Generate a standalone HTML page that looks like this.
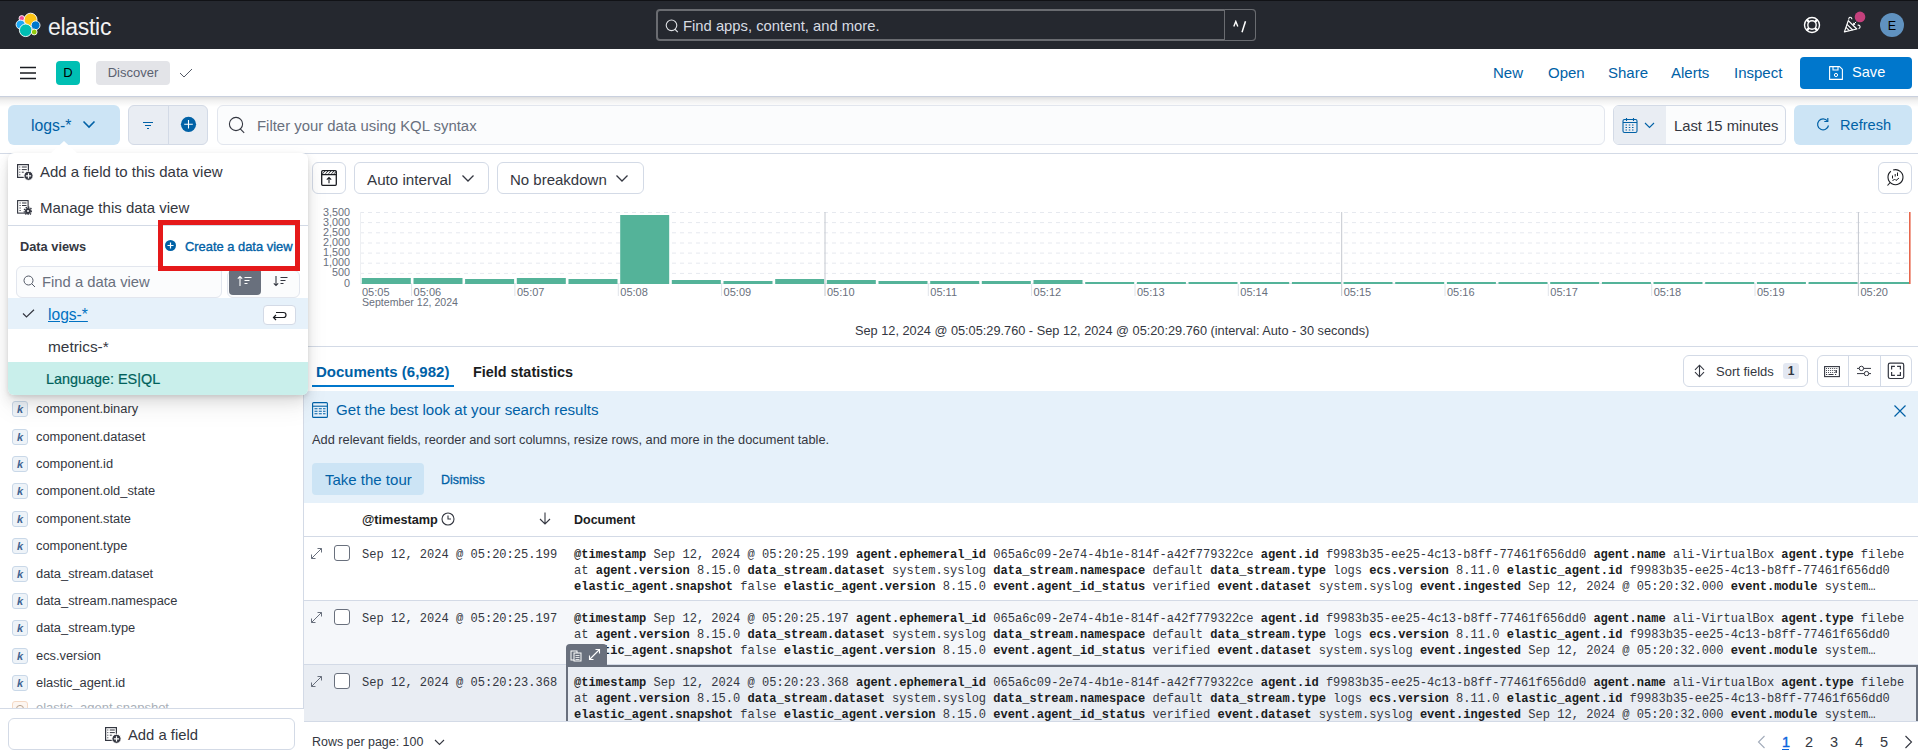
<!DOCTYPE html>
<html><head><meta charset="utf-8">
<style>
*{box-sizing:border-box;margin:0;padding:0}
html,body{width:1918px;height:750px;overflow:hidden;background:#fff;font-family:"Liberation Sans",sans-serif;color:#343741}
.a{position:absolute}
.mono{font-family:"Liberation Mono",monospace}
svg{display:block}
</style></head><body>

<!-- top dark header -->
<div class="a" style="left:0;top:0;width:1918px;height:49px;background:#25282f"></div>
<svg class="a" style="left:15px;top:12px" width="26" height="26" viewBox="0 0 26 26">
  <circle cx="6.8" cy="6.4" r="2.8" fill="#f04e98" stroke="#fff" stroke-width="0.9"/>
  <circle cx="15.6" cy="7.6" r="6.4" fill="#fec514" stroke="#fff" stroke-width="0.9"/>
  <circle cx="5.6" cy="12.6" r="4.5" fill="#1ba9f5" stroke="#fff" stroke-width="0.9"/>
  <circle cx="20.6" cy="13.3" r="4.4" fill="#0077cc" stroke="#fff" stroke-width="0.9"/>
  <circle cx="10.7" cy="18.3" r="6.3" fill="#00bfb3" stroke="#fff" stroke-width="0.9"/>
  <circle cx="19.2" cy="20" r="2.9" fill="#93c90e" stroke="#fff" stroke-width="0.9"/>
</svg>
<div class="a" style="left:48px;top:14px;font-size:23px;color:#f2f2f2;letter-spacing:-0.3px">elastic</div>

<!-- global search -->
<div class="a" style="left:0;top:0;width:1918px;height:1px;background:#111216"></div>
<div class="a" style="left:656px;top:9px;width:600px;height:32px;border:2px solid #6a6c71;border-radius:4px;background:#25282f"></div>
<div class="a" style="left:1224px;top:9px;width:32px;height:32px;border:1px solid #6a6c71;border-radius:0 4px 4px 0;background:#25282f"></div>
<svg class="a" style="left:665px;top:19px" width="15" height="15" viewBox="0 0 15 15"><circle cx="6.5" cy="6.3" r="5.3" fill="none" stroke="#e0e2e6" stroke-width="1.1"/><path d="M9.7 10 L12.8 13.2" stroke="#e0e2e6" stroke-width="1.1"/></svg>
<div class="a" style="left:683px;top:18px;font-size:14.8px;color:#d8dce3">Find apps, content, and more.</div>
<svg class="a" style="left:1232px;top:20px" width="16" height="14" viewBox="0 0 16 14"><path d="M1.8 6.5 L3.8 1.5 L5.8 6.5" fill="none" stroke="#fff" stroke-width="1.4"/><path d="M13.5 1.3 L10 12.2" stroke="#fff" stroke-width="1.5"/></svg>

<!-- header right icons -->
<svg class="a" style="left:1802px;top:15px" width="20" height="20" viewBox="0 0 20 20"><circle cx="10" cy="10" r="7.5" fill="none" stroke="#fff" stroke-width="1.4"/><circle cx="10" cy="10" r="4.2" fill="none" stroke="#fff" stroke-width="1.4"/><path d="M4.7 4.7 L7 7 M15.3 4.7 L13 7 M4.7 15.3 L7 13 M15.3 15.3 L13 13" stroke="#fff" stroke-width="2.4"/></svg>
<svg class="a" style="left:1843px;top:10px" width="24" height="24" viewBox="0 0 24 24"><path d="M1.4 21.9 L5.3 10.6 L13.8 19 Z" fill="none" stroke="#fff" stroke-width="1.2" stroke-linejoin="round"/><path d="M4 14.3 L9.7 20 M3 17.4 L6.4 20.7" stroke="#fff" stroke-width="1.1"/><path d="M5.8 9.6 C 5.3 6.8, 8.6 6.2, 8.9 9.2" fill="none" stroke="#fff" stroke-width="1.1"/><path d="M10.5 14.5 L13.2 11.8 M10.5 14.5 l0.2 -1.7 M10.5 14.5 l1.7 -0.2" stroke="#fff" stroke-width="1"/><path d="M14.6 15.2 C 17.4 14.6, 18 18, 15.6 18.8" fill="none" stroke="#fff" stroke-width="1.1"/><circle cx="17" cy="6.9" r="5.3" fill="#c4407c"/></svg>
<div class="a" style="left:1880px;top:13px;width:24px;height:24px;border-radius:50%;background:#6092c0"></div><div class="a" style="left:1880px;top:14px;width:24px;font-size:12.5px;text-align:center;line-height:24px;color:#000">E</div>

<!-- second bar -->
<div class="a" style="left:0;top:49px;width:1918px;height:48px;background:#fff;border-bottom:1px solid #c9d0de"></div>
<svg class="a" style="left:20px;top:66px" width="16" height="14" viewBox="0 0 16 14"><path d="M0 1.5 H16 M0 7 H16 M0 12.5 H16" stroke="#1a1c21" stroke-width="1.4"/></svg>
<div class="a" style="left:56px;top:61px;width:24px;height:24px;border-radius:4px;background:#00bfb3;color:#000;font-size:13px;text-align:center;line-height:24px">D</div>
<div class="a" style="left:96px;top:61px;width:74px;height:24px;border-radius:4px;background:#e3e4e8;color:#5a6170;font-size:13px;text-align:center;line-height:24px">Discover</div>
<svg class="a" style="left:179px;top:68px" width="14" height="11" viewBox="0 0 14 11"><path d="M1 5 L5 9 L13 1" fill="none" stroke="#535966" stroke-width="1"/></svg>

<div class="a" style="left:1493px;top:64px;font-size:15px;color:#0061a6">New</div>
<div class="a" style="left:1548px;top:64px;font-size:15px;color:#0061a6">Open</div>
<div class="a" style="left:1608px;top:64px;font-size:15px;color:#0061a6">Share</div>
<div class="a" style="left:1671px;top:64px;font-size:15px;color:#0061a6">Alerts</div>
<div class="a" style="left:1734px;top:64px;font-size:15px;color:#0061a6">Inspect</div>
<div class="a" style="left:1800px;top:57px;width:112px;height:32px;border-radius:4px;background:#0077cc"></div>
<svg class="a" style="left:1828px;top:65px" width="16" height="16" viewBox="0 0 16 16"><path d="M1.6 1.6 H11.6 L14.4 4.4 V14.4 H1.6 Z" fill="none" stroke="#fff" stroke-width="1.1" stroke-linejoin="round"/><path d="M5 1.6 V5 H10 V1.6" fill="none" stroke="#fff" stroke-width="1.1"/><circle cx="8" cy="10" r="1.6" fill="none" stroke="#fff" stroke-width="1"/></svg>
<div class="a" style="left:1852px;top:64px;font-size:14.6px;color:#fff">Save</div>

<!-- toolbar -->
<div class="a" style="left:0;top:97px;width:1918px;height:57px;background:#fff;border-bottom:1px solid #d3dae6"></div>
<div class="a" style="left:0;top:97px;width:1918px;height:10px;background:linear-gradient(rgba(0,0,0,.13),rgba(0,0,0,.05) 40%,rgba(0,0,0,0))"></div>
<div class="a" style="left:8px;top:105px;width:112px;height:40px;border-radius:6px;background:#cce4f5"></div>
<div class="a" style="left:31px;top:117px;font-size:15.8px;color:#0061a6">logs-*</div>
<svg class="a" style="left:82px;top:120px" width="14" height="9" viewBox="0 0 14 9"><path d="M1.5 1.5 L7 7 L12.5 1.5" fill="none" stroke="#0061a6" stroke-width="1.6"/></svg>
<div class="a" style="left:128px;top:105px;width:80px;height:40px;border-radius:6px;background:#e9edf3;border:1px solid #d3dae6"></div>
<div class="a" style="left:168px;top:106px;width:1px;height:38px;background:#d3dae6"></div>
<svg class="a" style="left:143px;top:121px" width="10" height="9" viewBox="0 0 10 9"><path d="M0 1.5 H10 M2 4.5 H8 M4 7.5 H6" stroke="#0061a6" stroke-width="1.1"/></svg>
<svg class="a" style="left:180px;top:116px" width="17" height="17" viewBox="0 0 17 17"><circle cx="8.5" cy="8.3" r="7.6" fill="#0061a6"/><path d="M8.5 4 V12.6 M4.2 8.3 H12.8" stroke="#fff" stroke-width="1.1"/></svg>
<div class="a" style="left:217px;top:105px;width:1388px;height:40px;border-radius:6px;background:#fbfcfd;border:1px solid #e2e6ee"></div>
<svg class="a" style="left:228px;top:116px" width="18" height="18" viewBox="0 0 18 18"><circle cx="8" cy="8" r="6.6" fill="none" stroke="#343741" stroke-width="1.1"/><path d="M12 12.6 L16.2 16.8" stroke="#343741" stroke-width="1.1"/></svg>
<div class="a" style="left:257px;top:118px;font-size:14.9px;color:#69707d">Filter your data using KQL syntax</div>
<div class="a" style="left:1613px;top:105px;width:173px;height:40px;border-radius:6px;background:#fbfcfd;border:1px solid #d3dae6"></div>
<div class="a" style="left:1614px;top:106px;width:52px;height:38px;border-radius:5px 0 0 5px;background:#e9edf3"></div>
<svg class="a" style="left:1622px;top:117px" width="16" height="17" viewBox="0 0 16 17"><rect x="1" y="2.5" width="14" height="13" rx="1.5" fill="none" stroke="#0061a6" stroke-width="1.1"/><path d="M1 5.5 H15 M4.5 1 V4 M11.5 1 V4" stroke="#0061a6" stroke-width="1.1"/><path d="M3.5 8 h1.5 M6.8 8 h1.5 M10 8 h1.5 M3.5 10.5 h1.5 M6.8 10.5 h1.5 M10 10.5 h1.5 M3.5 13 h1.5 M6.8 13 h1.5 M10 13 h1.5" stroke="#0061a6" stroke-width="1.2"/></svg>
<svg class="a" style="left:1644px;top:122px" width="11" height="7" viewBox="0 0 11 7"><path d="M1 1 L5.5 5.5 L10 1" fill="none" stroke="#0061a6" stroke-width="1.1"/></svg>
<div class="a" style="left:1674px;top:118px;font-size:14.8px;color:#343741">Last 15 minutes</div>
<div class="a" style="left:1794px;top:105px;width:118px;height:40px;border-radius:6px;background:#cce4f5"></div>
<svg class="a" style="left:1816px;top:117px" width="14" height="15" viewBox="0 0 14 15"><path d="M11.5 4 A5.5 5.5 0 1 0 12.5 8.5" fill="none" stroke="#0061a6" stroke-width="1.2"/><path d="M11.8 1 V4.5 H8.3" fill="none" stroke="#0061a6" stroke-width="1.2"/></svg>
<div class="a" style="left:1840px;top:117px;font-size:14.6px;color:#0061a6">Refresh</div>

<!-- main chart -->
<div class="a" style="left:312px;top:162px;width:34px;height:32px;border:1px solid #d3dae6;border-radius:6px;background:#fff"></div>
<svg class="a" style="left:321px;top:170px" width="16" height="16" viewBox="0 0 16 16"><rect x="0.7" y="0.7" width="14.6" height="14.6" rx="1" fill="none" stroke="#1a1c21" stroke-width="1.3"/><path d="M0.7 4.6 H15.3" stroke="#1a1c21" stroke-width="1.3"/><path d="M1.5 3.8 L4 1 M4.5 3.8 L7 1 M7.5 3.8 L10 1 M10.5 3.8 L13 1 M13 3.8 L15.3 1.3" stroke="#1a1c21" stroke-width=".9"/><path d="M8 13.2 V7.5 M5.8 9.7 L8 7.5 L10.2 9.7" fill="none" stroke="#1a1c21" stroke-width="1.1"/></svg>
<div class="a" style="left:354px;top:162px;width:135px;height:32px;border:1px solid #d3dae6;border-radius:6px;background:#fff"></div>
<div class="a" style="left:367px;top:171px;font-size:15.2px;color:#343741">Auto interval</div>
<svg class="a" style="left:461px;top:174px" width="14" height="9" viewBox="0 0 14 9"><path d="M1.5 1.5 L7 7 L12.5 1.5" fill="none" stroke="#343741" stroke-width="1.3"/></svg>
<div class="a" style="left:497px;top:162px;width:147px;height:32px;border:1px solid #d3dae6;border-radius:6px;background:#fff"></div>
<div class="a" style="left:510px;top:171px;font-size:15px;color:#343741">No breakdown</div>
<svg class="a" style="left:615px;top:174px" width="14" height="9" viewBox="0 0 14 9"><path d="M1.5 1.5 L7 7 L12.5 1.5" fill="none" stroke="#343741" stroke-width="1.3"/></svg>
<div class="a" style="left:1878px;top:162px;width:34px;height:32px;border:1px solid #d3dae6;border-radius:6px;background:#fff"></div>
<svg class="a" style="left:1885px;top:167px" width="20" height="20" viewBox="0 0 20 20"><path d="M8.18 3.07 A7.5 7.5 0 1 1 5.88 4.29" fill="none" stroke="#1a1c21" stroke-width="1.1"/><path d="M5.20 15.50 L2.5 18.5" stroke="#1a1c21" stroke-width="1.1"/><path d="M7.5 8.5 V11.5 M10.2 7 V9.5 M12.5 5.5 V9" stroke="#1a1c21" stroke-width="1"/><path d="M7.5 14 L9.5 12 L11 13.5 L14 11" fill="none" stroke="#1a1c21" stroke-width="1"/></svg>
<svg class="a" style="left:305px;top:200px" width="1613" height="115" viewBox="0 0 1613 115" font-family="Liberation Sans" font-size="11" fill="#69707d">
<path d="M55 12.5 H1604" stroke="#e6e9ef" stroke-width="1" stroke-dasharray="4 4"/><path d="M55 22.6 H1604" stroke="#e6e9ef" stroke-width="1" stroke-dasharray="4 4"/><path d="M55 32.8 H1604" stroke="#e6e9ef" stroke-width="1" stroke-dasharray="4 4"/><path d="M55 43.0 H1604" stroke="#e6e9ef" stroke-width="1" stroke-dasharray="4 4"/><path d="M55 53.1 H1604" stroke="#e6e9ef" stroke-width="1" stroke-dasharray="4 4"/><path d="M55 63.2 H1604" stroke="#e6e9ef" stroke-width="1" stroke-dasharray="4 4"/><path d="M55 73.4 H1604" stroke="#e6e9ef" stroke-width="1" stroke-dasharray="4 4"/><path d="M55 83.5 H1604" stroke="#e6e9ef" stroke-width="1" stroke-dasharray="4 4"/>
<path d="M55.5 12 V84" stroke="#eef0f3" stroke-width="1"/>
<rect x="56.8" y="78" width="49" height="6" fill="#54b399"/><rect x="108.5" y="78" width="49" height="6" fill="#54b399"/><rect x="160.1" y="79" width="49" height="5" fill="#54b399"/><rect x="211.8" y="78" width="49" height="6" fill="#54b399"/><rect x="263.5" y="79" width="49" height="5" fill="#54b399"/><rect x="315.2" y="15" width="49" height="69" fill="#54b399"/><rect x="366.8" y="80" width="49" height="4" fill="#54b399"/><rect x="418.5" y="81" width="49" height="3" fill="#54b399"/><rect x="470.2" y="79" width="49" height="5" fill="#54b399"/><rect x="521.8" y="80" width="49" height="4" fill="#54b399"/><rect x="573.5" y="81" width="49" height="3" fill="#54b399"/><rect x="625.2" y="81" width="49" height="3" fill="#54b399"/><rect x="676.8" y="81" width="49" height="3" fill="#54b399"/><rect x="728.5" y="80" width="49" height="4" fill="#54b399"/><rect x="780.2" y="82" width="49" height="2" fill="#54b399"/><rect x="831.9" y="82" width="49" height="2" fill="#54b399"/><rect x="883.5" y="82" width="49" height="2" fill="#54b399"/><rect x="935.2" y="82" width="49" height="2" fill="#54b399"/><rect x="986.9" y="82" width="49" height="2" fill="#54b399"/><rect x="1038.5" y="82" width="49" height="2" fill="#54b399"/><rect x="1090.2" y="82" width="49" height="2" fill="#54b399"/><rect x="1141.9" y="82" width="49" height="2" fill="#54b399"/><rect x="1193.5" y="82" width="49" height="2" fill="#54b399"/><rect x="1245.2" y="82" width="49" height="2" fill="#54b399"/><rect x="1296.9" y="82" width="49" height="2" fill="#54b399"/><rect x="1348.5" y="82" width="49" height="2" fill="#54b399"/><rect x="1400.2" y="82" width="49" height="2" fill="#54b399"/><rect x="1451.9" y="82" width="49" height="2" fill="#54b399"/><rect x="1503.6" y="82" width="49" height="2" fill="#54b399"/><rect x="1555.2" y="82" width="49" height="2" fill="#54b399"/>
<path d="M106.6 84 V96" stroke="#e0e4ea" stroke-width="1"/><path d="M209.9 84 V96" stroke="#e0e4ea" stroke-width="1"/><path d="M313.3 84 V96" stroke="#e0e4ea" stroke-width="1"/><path d="M416.6 84 V96" stroke="#e0e4ea" stroke-width="1"/><path d="M520.0 12 V96" stroke="#c4c8cf" stroke-width="1"/><path d="M623.3 84 V96" stroke="#e0e4ea" stroke-width="1"/><path d="M726.6 84 V96" stroke="#e0e4ea" stroke-width="1"/><path d="M830.0 84 V96" stroke="#e0e4ea" stroke-width="1"/><path d="M933.3 84 V96" stroke="#e0e4ea" stroke-width="1"/><path d="M1036.7 12 V96" stroke="#c4c8cf" stroke-width="1"/><path d="M1140.0 84 V96" stroke="#e0e4ea" stroke-width="1"/><path d="M1243.3 84 V96" stroke="#e0e4ea" stroke-width="1"/><path d="M1346.7 84 V96" stroke="#e0e4ea" stroke-width="1"/><path d="M1450.0 84 V96" stroke="#e0e4ea" stroke-width="1"/><path d="M1553.4 12 V96" stroke="#c4c8cf" stroke-width="1"/>
<path d="M1604.8 12 V84" stroke="#e7664c" stroke-width="1.6"/>
<g text-anchor="end" font-size="10.8"><text x="45" y="16">3,500</text><text x="45" y="26">3,000</text><text x="45" y="36">2,500</text><text x="45" y="46">2,000</text><text x="45" y="56">1,500</text><text x="45" y="66">1,000</text><text x="45" y="76">500</text><text x="45" y="87">0</text></g>
<text x="57" y="96">05:05</text><text x="57" y="106" font-size="10.6">September 12, 2024</text><text x="108.6" y="96">05:06</text><text x="211.9" y="96">05:07</text><text x="315.3" y="96">05:08</text><text x="418.6" y="96">05:09</text><text x="522.0" y="96">05:10</text><text x="625.3" y="96">05:11</text><text x="728.6" y="96">05:12</text><text x="832.0" y="96">05:13</text><text x="935.3" y="96">05:14</text><text x="1038.7" y="96">05:15</text><text x="1142.0" y="96">05:16</text><text x="1245.3" y="96">05:17</text><text x="1348.7" y="96">05:18</text><text x="1452.0" y="96">05:19</text><text x="1555.4" y="96">05:20</text>
</svg>
<div class="a" style="left:855px;top:323px;font-size:12.75px;color:#343741">Sep 12, 2024 @ 05:05:29.760 - Sep 12, 2024 @ 05:20:29.760 (interval: Auto - 30 seconds)</div>
<div class="a" style="left:305px;top:346px;width:1613px;height:1px;background:#d3dae6"></div>
<!-- tabs -->
<style>
.doc{font-size:12.05px;line-height:16px;color:#343741;white-space:pre}
.doc b{color:#1a1c21}
</style>
<div class="a" style="left:316px;top:363px;font-size:15px;font-weight:bold;color:#0061a6">Documents (6,982)</div>
<div class="a" style="left:312px;top:385px;width:142px;height:2px;background:#0077cc"></div>
<div class="a" style="left:473px;top:364px;font-size:14.4px;font-weight:bold;color:#1a1c21">Field statistics</div>
<div class="a" style="left:1683px;top:355px;width:125px;height:32px;border:1px solid #d3dae6;border-radius:6px;background:#fff"></div>
<svg class="a" style="left:1693px;top:363px" width="13" height="16" viewBox="0 0 13 16"><path d="M6.5 2.2 V13.8 M2 6.8 L6.5 2.2 L11 6.8 M2 9.2 L6.5 13.8 L11 9.2" fill="none" stroke="#343741" stroke-width="1.1"/></svg>
<div class="a" style="left:1716px;top:364px;font-size:13px;color:#343741">Sort fields</div>
<div class="a" style="left:1783px;top:363px;width:16px;height:16px;border-radius:3px;background:#e3e8f2;font-size:12px;font-weight:bold;text-align:center;line-height:16px;color:#343741">1</div>
<div class="a" style="left:1817px;top:355px;width:95px;height:32px;border:1px solid #d3dae6;border-radius:6px;background:#fff"></div>
<div class="a" style="left:1848px;top:356px;width:1px;height:31px;background:#d3dae6"></div>
<div class="a" style="left:1880px;top:356px;width:1px;height:31px;background:#d3dae6"></div>
<svg class="a" style="left:1823px;top:365px" width="18" height="13" viewBox="0 0 18 13"><rect x="1.6" y="1.6" width="14.8" height="10" fill="none" stroke="#343741" stroke-width="1.1"/><path d="M2.60 2.5h0.9 M4.65 2.5h0.9 M6.70 2.5h0.9 M8.75 2.5h0.9 M10.80 2.5h0.9 M12.85 2.5h0.9 M2.60 4.5h0.9 M2.60 6.5h0.9 M4.65 4.5h0.9 M4.65 6.5h0.9 M6.70 4.5h0.9 M6.70 6.5h0.9 M8.75 4.5h0.9 M8.75 6.5h0.9 M10.80 4.5h0.9 M10.80 6.5h0.9" transform="translate(0.5 1)" stroke="#343741" stroke-width="1"/><path d="M13.2 5 V8" stroke="#343741" stroke-width="1.4" transform="translate(0 0)"/><path d="M3 9.5 h1.2 M5.5 9.5 h5 M12 9.5 h1.2" stroke="#343741" stroke-width="1"/></svg>
<svg class="a" style="left:1856px;top:364px" width="16" height="12" viewBox="0 0 16 12"><path d="M1 4.4h14 M1 9.6h14" stroke="#343741" stroke-width="1"/><circle cx="5.4" cy="4.4" r="2.2" fill="#fff" stroke="#343741" stroke-width="1"/><circle cx="10.5" cy="9.6" r="2.2" fill="#fff" stroke="#343741" stroke-width="1"/></svg>
<svg class="a" style="left:1887px;top:362px" width="18" height="18" viewBox="0 0 18 18"><rect x="1.3" y="1.1" width="15.4" height="15.4" rx="1.8" fill="none" stroke="#343741" stroke-width="1.2"/><path d="M4.6 7.6 V4.3 H7.9 M10.1 4.3 H13.4 V7.6 M13.4 10 V13.3 H10.1 M7.9 13.3 H4.6 V10" fill="none" stroke="#343741" stroke-width="1.2"/></svg>
<!-- callout -->
<div class="a" style="left:304px;top:391px;width:1614px;height:112px;background:#e6f1fa"></div>
<svg class="a" style="left:312px;top:402px" width="16" height="16" viewBox="0 0 16 16"><rect x="0.6" y="0.6" width="14.8" height="14.8" rx="1" fill="none" stroke="#0061a6" stroke-width="1.1"/><path d="M0.6 4.2 H15.4" stroke="#0061a6" stroke-width="1.1"/><path d="M2.5 6.8h3 M6.8 6.8h3 M11 6.8h2.5 M2.5 9.3h3 M6.8 9.3h3 M11 9.3h2.5 M2.5 11.8h3 M6.8 11.8h3 M11 11.8h2.5" stroke="#0061a6" stroke-width="1.1"/></svg>
<div class="a" style="left:336px;top:401px;font-size:15.1px;color:#0061a6">Get the best look at your search results</div>
<div class="a" style="left:312px;top:432px;font-size:12.8px;color:#343741">Add relevant fields, reorder and sort columns, resize rows, and more in the document table.</div>
<svg class="a" style="left:1893px;top:404px" width="14" height="14" viewBox="0 0 14 14"><path d="M1.5 1.5 L12.5 12.5 M12.5 1.5 L1.5 12.5" stroke="#0061a6" stroke-width="1.2"/></svg>
<div class="a" style="left:312px;top:463px;width:112px;height:32px;border-radius:4px;background:#cce4f5"></div>
<div class="a" style="left:325px;top:471px;font-size:15px;color:#0061a6">Take the tour</div>
<div class="a" style="left:441px;top:473px;font-size:12.5px;color:#0061a6;-webkit-text-stroke:0.3px #0061a6">Dismiss</div>
<!-- table -->
<div class="a" style="left:304px;top:503px;width:1614px;height:34px;background:#fff;border-bottom:1px solid #d3dae6"></div>
<div class="a" style="left:362px;top:513px;font-size:12.7px;font-weight:bold;color:#1a1c21">@timestamp</div>
<svg class="a" style="left:441px;top:512px" width="14" height="14" viewBox="0 0 14 14"><circle cx="7" cy="7" r="6" fill="none" stroke="#343741" stroke-width="1.1"/><path d="M7 3.5 V7 H10" fill="none" stroke="#343741" stroke-width="1.1"/></svg>
<svg class="a" style="left:539px;top:512px" width="12" height="13" viewBox="0 0 12 13"><path d="M6 0.5 V12 M1 7 L6 12 L11 7" fill="none" stroke="#343741" stroke-width="1.1"/></svg>
<div class="a" style="left:574px;top:513px;font-size:12.5px;font-weight:bold;color:#1a1c21">Document</div>
<div class="a" style="left:304px;top:537px;width:1614px;height:64px;background:#fff"></div>
<svg class="a" style="left:310px;top:547px" width="13" height="13" viewBox="0 0 13 13"><path d="M1.5 11.5 L11.5 1.5 M1.5 7.5 V11.5 H5.5 M7.5 1.5 H11.5 V5.5" fill="none" stroke="#69707d" stroke-width="1"/></svg>
<div class="a" style="left:334px;top:545px;width:16px;height:16px;border:1px solid #69707d;border-radius:3px;background:#fff"></div>
<div class="a mono doc" style="left:362px;top:547px">Sep 12, 2024 @ 05:20:25.199</div>
<div class="a mono doc" style="left:574px;top:547px"><b>@timestamp</b> Sep 12, 2024 @ 05:20:25.199 <b>agent.ephemeral_id</b> 065a6c09-2e74-4b1e-814f-a42f779322ce <b>agent.id</b> f9983b35-ee25-4c13-b8ff-77461f656dd0 <b>agent.name</b> ali-VirtualBox <b>agent.type</b> filebe<br>at <b>agent.version</b> 8.15.0 <b>data_stream.dataset</b> system.syslog <b>data_stream.namespace</b> default <b>data_stream.type</b> logs <b>ecs.version</b> 8.11.0 <b>elastic_agent.id</b> f9983b35-ee25-4c13-b8ff-77461f656dd0<br><b>elastic_agent.snapshot</b> false <b>elastic_agent.version</b> 8.15.0 <b>event.agent_id_status</b> verified <b>event.dataset</b> system.syslog <b>event.ingested</b> Sep 12, 2024 @ 05:20:32.000 <b>event.module</b> system…</div>
<div class="a" style="left:304px;top:600px;width:1614px;height:1px;background:#d3dae6"></div>
<div class="a" style="left:304px;top:601px;width:1614px;height:64px;background:#f5f7fa"></div>
<svg class="a" style="left:310px;top:611px" width="13" height="13" viewBox="0 0 13 13"><path d="M1.5 11.5 L11.5 1.5 M1.5 7.5 V11.5 H5.5 M7.5 1.5 H11.5 V5.5" fill="none" stroke="#69707d" stroke-width="1"/></svg>
<div class="a" style="left:334px;top:609px;width:16px;height:16px;border:1px solid #69707d;border-radius:3px;background:#fff"></div>
<div class="a mono doc" style="left:362px;top:611px">Sep 12, 2024 @ 05:20:25.197</div>
<div class="a mono doc" style="left:574px;top:611px"><b>@timestamp</b> Sep 12, 2024 @ 05:20:25.197 <b>agent.ephemeral_id</b> 065a6c09-2e74-4b1e-814f-a42f779322ce <b>agent.id</b> f9983b35-ee25-4c13-b8ff-77461f656dd0 <b>agent.name</b> ali-VirtualBox <b>agent.type</b> filebe<br>at <b>agent.version</b> 8.15.0 <b>data_stream.dataset</b> system.syslog <b>data_stream.namespace</b> default <b>data_stream.type</b> logs <b>ecs.version</b> 8.11.0 <b>elastic_agent.id</b> f9983b35-ee25-4c13-b8ff-77461f656dd0<br><b>elastic_agent.snapshot</b> false <b>elastic_agent.version</b> 8.15.0 <b>event.agent_id_status</b> verified <b>event.dataset</b> system.syslog <b>event.ingested</b> Sep 12, 2024 @ 05:20:32.000 <b>event.module</b> system…</div>
<div class="a" style="left:304px;top:664px;width:1614px;height:1px;background:#d3dae6"></div>
<div class="a" style="left:304px;top:665px;width:1614px;height:64px;background:#e9edf3"></div>
<svg class="a" style="left:310px;top:675px" width="13" height="13" viewBox="0 0 13 13"><path d="M1.5 11.5 L11.5 1.5 M1.5 7.5 V11.5 H5.5 M7.5 1.5 H11.5 V5.5" fill="none" stroke="#69707d" stroke-width="1"/></svg>
<div class="a" style="left:334px;top:673px;width:16px;height:16px;border:1px solid #69707d;border-radius:3px;background:#fff"></div>
<div class="a mono doc" style="left:362px;top:675px">Sep 12, 2024 @ 05:20:23.368</div>
<div class="a mono doc" style="left:574px;top:675px"><b>@timestamp</b> Sep 12, 2024 @ 05:20:23.368 <b>agent.ephemeral_id</b> 065a6c09-2e74-4b1e-814f-a42f779322ce <b>agent.id</b> f9983b35-ee25-4c13-b8ff-77461f656dd0 <b>agent.name</b> ali-VirtualBox <b>agent.type</b> filebe<br>at <b>agent.version</b> 8.15.0 <b>data_stream.dataset</b> system.syslog <b>data_stream.namespace</b> default <b>data_stream.type</b> logs <b>ecs.version</b> 8.11.0 <b>elastic_agent.id</b> f9983b35-ee25-4c13-b8ff-77461f656dd0<br><b>elastic_agent.snapshot</b> false <b>elastic_agent.version</b> 8.15.0 <b>event.agent_id_status</b> verified <b>event.dataset</b> system.syslog <b>event.ingested</b> Sep 12, 2024 @ 05:20:32.000 <b>event.module</b> system…</div>
<div class="a" style="left:304px;top:728px;width:1614px;height:1px;background:#d3dae6"></div>

<!-- focus cell -->
<div class="a" style="left:566px;top:665px;width:1352px;height:56px;border:2px solid #69707d;border-bottom:none;border-right:2px solid #69707d"></div>
<div class="a" style="left:566px;top:644px;width:41px;height:22px;background:#69707d;border-radius:4px 4px 0 0"></div>
<svg class="a" style="left:570px;top:648px" width="14" height="14" viewBox="0 0 14 14"><rect x="1" y="3" width="6" height="9" fill="none" stroke="#fff" stroke-width="1"/><rect x="4" y="5" width="7" height="8" fill="#69707d" stroke="#fff" stroke-width="1"/><path d="M5.5 7.5h4 M5.5 9.5h4 M5.5 11.5h4" stroke="#fff" stroke-width=".8"/></svg>
<svg class="a" style="left:588px;top:648px" width="13" height="13" viewBox="0 0 13 13"><path d="M1.5 11.5 L11.5 1.5 M1.5 7.5 V11.5 H5.5 M7.5 1.5 H11.5 V5.5" fill="none" stroke="#fff" stroke-width="1.1"/></svg>
<!-- footer -->
<div class="a" style="left:304px;top:721px;width:1614px;height:29px;background:#fff;border-top:1px solid #d3dae6"></div>
<div class="a" style="left:312px;top:735px;font-size:12.45px;color:#343741">Rows per page: 100</div>
<svg class="a" style="left:434px;top:739px" width="11" height="7" viewBox="0 0 11 7"><path d="M1 1 L5.5 5.5 L10 1" fill="none" stroke="#343741" stroke-width="1.1"/></svg>
<svg class="a" style="left:1757px;top:735px" width="9" height="14" viewBox="0 0 9 14"><path d="M7.5 1 L1.5 7 L7.5 13" fill="none" stroke="#a2abba" stroke-width="1.1"/></svg>
<div class="a" style="left:1782px;top:734px;font-size:14.5px;color:#0b64dd;-webkit-text-stroke:0.4px #0b64dd;line-height:17px">1</div>
<div class="a" style="left:1782px;top:749px;width:7px;height:1px;background:#0b64dd"></div>
<div class="a" style="left:1805px;top:734px;font-size:14.5px;color:#343741">2</div>
<div class="a" style="left:1830px;top:734px;font-size:14.5px;color:#343741">3</div>
<div class="a" style="left:1855px;top:734px;font-size:14.5px;color:#343741">4</div>
<div class="a" style="left:1880px;top:734px;font-size:14.5px;color:#343741">5</div>
<svg class="a" style="left:1904px;top:735px" width="9" height="14" viewBox="0 0 9 14"><path d="M1.5 1 L7.5 7 L1.5 13" fill="none" stroke="#343741" stroke-width="1.1"/></svg>

<!-- sidebar -->
<style>
.tok{left:12px;width:16px;height:16px;border:1px solid #c9d8e8;border-radius:3px;background:#eef3f8;color:#3f6391;font-weight:bold;font-style:italic;font-size:11px;text-align:center;line-height:14px}
.fld{left:36px;font-size:12.85px;color:#343741;line-height:18px}
</style>
<div class="a" style="left:303px;top:154px;width:1px;height:596px;background:#d3dae6"></div>
<div class="a tok" style="top:401px">k</div><div class="a fld" style="top:400px">component.binary</div>
<div class="a tok" style="top:429px">k</div><div class="a fld" style="top:428px">component.dataset</div>
<div class="a tok" style="top:456px">k</div><div class="a fld" style="top:455px">component.id</div>
<div class="a tok" style="top:483px">k</div><div class="a fld" style="top:482px">component.old_state</div>
<div class="a tok" style="top:511px">k</div><div class="a fld" style="top:510px">component.state</div>
<div class="a tok" style="top:538px">k</div><div class="a fld" style="top:537px">component.type</div>
<div class="a tok" style="top:566px">k</div><div class="a fld" style="top:565px">data_stream.dataset</div>
<div class="a tok" style="top:593px">k</div><div class="a fld" style="top:592px">data_stream.namespace</div>
<div class="a tok" style="top:620px">k</div><div class="a fld" style="top:619px">data_stream.type</div>
<div class="a tok" style="top:648px">k</div><div class="a fld" style="top:647px">ecs.version</div>
<div class="a tok" style="top:675px">k</div><div class="a fld" style="top:674px">elastic_agent.id</div>

<div class="a" style="left:12px;top:701px;width:16px;height:16px;border:1px solid #f0c9ad;border-radius:3px;background:#fdf3ec;opacity:.7"></div><svg class="a" style="left:15px;top:704px" width="10" height="10" viewBox="0 0 10 10"><circle cx="5" cy="5" r="3.6" fill="none" stroke="#b9a38f" stroke-width="1"/></svg>
<div class="a" style="left:36px;top:699px;font-size:13px;color:#a9afb8;line-height:18px">elastic_agent.snapshot</div>
<div class="a" style="left:0;top:708px;width:304px;height:42px;background:#fff;border-top:1px solid #d3dae6"></div>
<div class="a" style="left:8px;top:718px;width:287px;height:32px;border:1px solid #d3dae6;border-radius:6px;background:#fff"></div>
<svg class="a" style="left:105px;top:727px" width="17" height="17" viewBox="0 0 17 17"><rect x="0.6" y="0.6" width="10.8" height="12.8" fill="none" stroke="#343741" stroke-width="1.2"/><path d="M2.3 3h1 M4.8 3h5 M2.3 5.6h1 M4.8 5.6h5 M2.3 8.2h1 M4.8 8.2h2 M2.3 10.8h1" stroke="#343741" stroke-width="1"/><circle cx="11.5" cy="11.8" r="4.6" fill="#343741" stroke="#fff" stroke-width="1"/><path d="M11.5 9.2v5.2 M8.9 11.8h5.2" stroke="#fff" stroke-width="1.2"/></svg>
<div class="a" style="left:128px;top:727px;font-size:14.8px;color:#343741">Add a field</div>
<!-- popover -->
<div class="a" style="left:8px;top:153px;width:300px;height:242px;background:#fff;border-radius:6px;box-shadow:0 2px 4px rgba(0,0,0,.10),0 6px 14px rgba(0,0,0,.10),0 14px 24px rgba(0,0,0,.06);overflow:hidden">
</div>
<svg class="a" style="left:50px;top:141px" width="28" height="13" viewBox="0 0 28 13"><path d="M0 13 L14 0 L28 13 Z" fill="#fff"/></svg>
<svg class="a" style="left:17px;top:164px" width="17" height="17" viewBox="0 0 17 17"><rect x="0.6" y="0.6" width="10.8" height="12.8" fill="none" stroke="#343741" stroke-width="1.2"/><path d="M2.3 3h1 M4.8 3h5 M2.3 5.6h1 M4.8 5.6h5 M2.3 8.2h1 M4.8 8.2h2 M2.3 10.8h1" stroke="#343741" stroke-width="1"/><circle cx="11.5" cy="11.8" r="4.6" fill="#343741" stroke="#fff" stroke-width="1"/><path d="M11.5 9.2v5.2 M8.9 11.8h5.2" stroke="#fff" stroke-width="1.2"/></svg>
<div class="a" style="left:40px;top:163px;font-size:15px;color:#343741">Add a field to this data view</div>
<svg class="a" style="left:17px;top:200px" width="15" height="15" viewBox="0 0 15 15"><rect x="0.6" y="0.6" width="10.5" height="12.5" fill="none" stroke="#343741" stroke-width="1.1"/><path d="M2.5 3h1.2 M5 3h4.5 M2.5 5.5h1.2 M5 5.5h4.5 M2.5 8h1.2 M2.5 10.5h1.2" stroke="#343741" stroke-width="1"/><circle cx="11" cy="11" r="3" fill="#343741"/><circle cx="11" cy="11" r="3.8" fill="none" stroke="#343741" stroke-width="1.3" stroke-dasharray="1.4 1.1"/><circle cx="11" cy="11" r="1" fill="#fff"/></svg>
<div class="a" style="left:40px;top:199px;font-size:15px;color:#343741">Manage this data view</div>
<div class="a" style="left:8px;top:225px;width:300px;height:1px;background:#d3dae6"></div>
<div class="a" style="left:20px;top:239px;font-size:12.8px;font-weight:bold;color:#343741">Data views</div>
<svg class="a" style="left:165px;top:240px" width="11" height="11" viewBox="0 0 11 11"><circle cx="5.5" cy="5.5" r="5.5" fill="#0061a6"/><path d="M5.5 2.5v6 M2.5 5.5h6" stroke="#fff" stroke-width="1.2"/></svg>
<div class="a" style="left:185px;top:239px;font-size:12.9px;color:#0061a6;-webkit-text-stroke:0.35px #0061a6">Create a data view</div>
<div class="a" style="left:16px;top:266px;width:206px;height:32px;border:1px solid #e2e6ee;border-radius:6px;background:#fbfcfd"></div>
<svg class="a" style="left:23px;top:275px" width="13" height="13" viewBox="0 0 13 13"><circle cx="5.5" cy="5.5" r="4.5" fill="none" stroke="#535966" stroke-width="1"/><path d="M8.7 8.7 L12 12" stroke="#535966" stroke-width="1"/></svg>
<div class="a" style="left:42px;top:274px;font-size:14.8px;color:#69707d">Find a data view</div>
<div class="a" style="left:227px;top:270px;width:73px;height:28px;border:1px solid #e2e6ee;border-radius:6px;background:#fbfcfd"></div>
<div class="a" style="left:229px;top:268px;width:32px;height:27px;border-radius:4px;background:#69707d"></div>
<svg class="a" style="left:237px;top:275px" width="16" height="12" viewBox="0 0 16 12"><path d="M3 11 V1.5 M0.8 3.7 L3 1.5 L5.2 3.7" fill="none" stroke="#fff" stroke-width="1.1"/><path d="M7.5 2.5h7 M7.5 5.5h5 M7.5 8.5h3" stroke="#fff" stroke-width="1.1"/></svg>
<svg class="a" style="left:273px;top:275px" width="16" height="12" viewBox="0 0 16 12"><path d="M3 1 V10.5 M0.8 8.3 L3 10.5 L5.2 8.3" fill="none" stroke="#343741" stroke-width="1.1"/><path d="M7.5 2.5h7 M7.5 5.5h5 M7.5 8.5h3" stroke="#343741" stroke-width="1.1"/></svg>
<div class="a" style="left:8px;top:298px;width:300px;height:31px;background:#e6f1fa"></div>
<svg class="a" style="left:22px;top:309px" width="13" height="10" viewBox="0 0 13 10"><path d="M1 4.5 L4.5 8 L12 0.8" fill="none" stroke="#343741" stroke-width="1.2"/></svg>
<div class="a" style="left:48px;top:306px;font-size:15.6px;color:#0071c2;text-decoration:underline;text-underline-offset:1px">logs-*</div>
<div class="a" style="left:263px;top:305px;width:33px;height:20px;border:1px solid #d3dae6;border-radius:4px;background:#fff"></div>
<svg class="a" style="left:272px;top:309px" width="15" height="12" viewBox="0 0 15 12"><path d="M4 3.5 H11.5 A2.5 2.5 0 0 1 11.5 8.5 H1.5 M4 6 L1.5 8.5 L4 11" fill="none" stroke="#1a1c21" stroke-width="1.2"/></svg>
<div class="a" style="left:48px;top:338px;font-size:15.4px;color:#343741">metrics-*</div>
<div class="a" style="left:8px;top:362px;width:300px;height:33px;background:#c9efeb;border-radius:0 0 6px 6px"></div>
<div class="a" style="left:46px;top:371px;font-size:14.4px;color:#00615b;-webkit-text-stroke:0.2px #00615b">Language: ES|QL</div>
<div class="a" style="left:158px;top:220px;width:142px;height:51px;border:5px solid #e5191a"></div>
</body></html>
